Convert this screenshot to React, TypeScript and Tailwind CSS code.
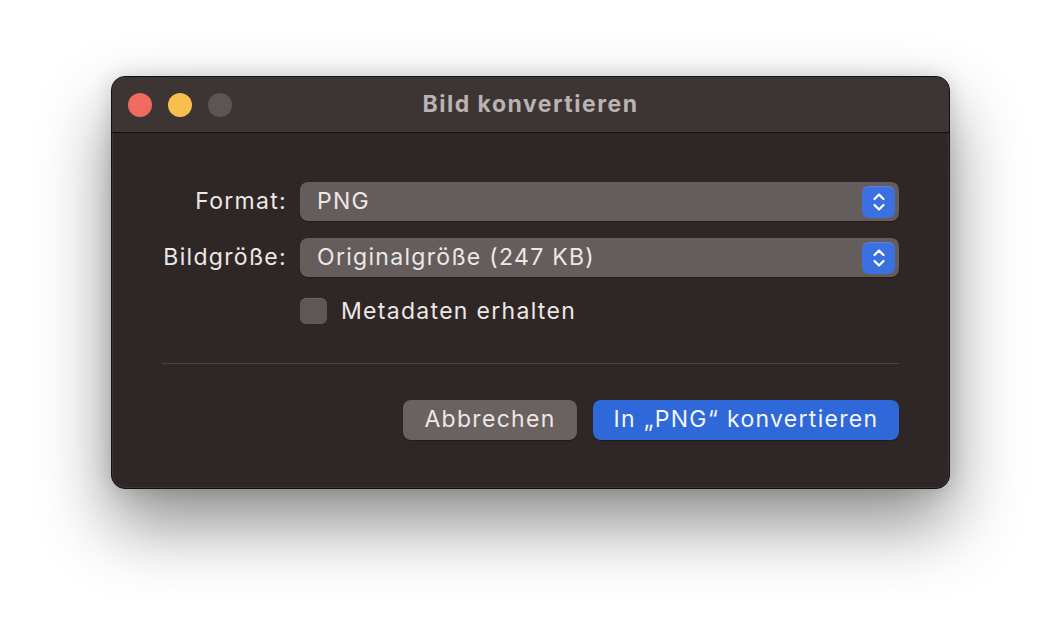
import React from 'react';

const font = { fontFamily: 'Inter, "Noto Sans", "Liberation Sans", sans-serif' };

function Stepper() {
  return (
    <div className="flex h-[32px] w-[33px] items-center justify-center rounded-[7px] bg-[#3a70e0] shadow-[inset_0_1px_0_rgba(255,255,255,0.15)]">
      <svg width="14" height="22" viewBox="0 0 14 22" fill="none" stroke="white" strokeWidth="2.2" strokeLinecap="round" strokeLinejoin="round">
        <path d="M2.5 8 L7 3.5 L11.5 8" />
        <path d="M2.5 14 L7 18.5 L11.5 14" />
      </svg>
    </div>
  );
}

function Popup({ value }: { value: string }) {
  return (
    <div className="flex h-[39px] items-center justify-between rounded-[8px] bg-[#655d5b] pl-[17px] pr-[4px] shadow-[0_1px_1px_rgba(0,0,0,0.3)]">
      <span className="text-[23px] tracking-[1.3px] text-[#ece8e7]">{value}</span>
      <Stepper />
    </div>
  );
}

export default function App() {
  return (
    <div className="min-h-screen w-full bg-white pl-[111px] pt-[76px]" style={font}>
      <div className="w-[839px] overflow-hidden rounded-[14px] border border-[#111] bg-[#2f2726] shadow-[0_0_0_1px_rgba(255,255,255,0.08)_inset,0_35px_70px_rgba(0,0,0,0.45),0_0_20px_rgba(0,0,0,0.15)]">
        {/* title bar */}
        <div className="relative flex h-[56px] items-center border-b border-[#151112] bg-[#3c3534] px-[16px]">
          <div className="flex gap-[16px]">
            <div className="h-[24px] w-[24px] rounded-full bg-[#ef6a5f]" />
            <div className="h-[24px] w-[24px] rounded-full bg-[#f6bf4f]" />
            <div className="h-[24px] w-[24px] rounded-full bg-[#5b5554]" />
          </div>
          <div className="absolute inset-0 flex items-center justify-center text-[23px] font-bold tracking-[1.5px] text-[#bab3b2]">
            Bild konvertieren
          </div>
        </div>

        {/* body */}
        <div className="px-[50px] pb-[48px] pt-[49px]">
          <div className="grid grid-cols-[125px_1fr] items-center gap-x-[13px] gap-y-[17px]">
            <div className="whitespace-nowrap text-right text-[23px] tracking-[1.3px] text-[#ece8e7]">Format:</div>
            <Popup value="PNG" />
            <div className="whitespace-nowrap text-right text-[23px] tracking-[1.3px] text-[#ece8e7]">Bildgröße:</div>
            <Popup value="Originalgröße (247 KB)" />
            <div />
            <div className="flex items-center gap-[14px]">
              <div className="h-[26px] w-[27px] rounded-[6px] bg-[#5e5756] shadow-[inset_0_1px_0_rgba(255,255,255,0.08)]" />
              <span className="text-[23px] tracking-[1.3px] text-[#ece8e7]">Metadaten erhalten</span>
            </div>
          </div>

          <div className="mt-[34px] h-[1px] bg-[#4b4342]" />

          <div className="mt-[36px] flex justify-end gap-[16px]">
            <button className="h-[40px] w-[174px] rounded-[8px] bg-[#6a6260] text-[23px] tracking-[1.3px] text-[#ece8e7] shadow-[0_1px_1px_rgba(0,0,0,0.3)]">
              Abbrechen
            </button>
            <button className="h-[40px] w-[306px] rounded-[8px] bg-[#2f68d9] text-[23px] tracking-[1.3px] text-[#f3f5fb] shadow-[0_1px_1px_rgba(0,0,0,0.3)]">
              In „PNG“ konvertieren
            </button>
          </div>
        </div>
      </div>
    </div>
  );
}
